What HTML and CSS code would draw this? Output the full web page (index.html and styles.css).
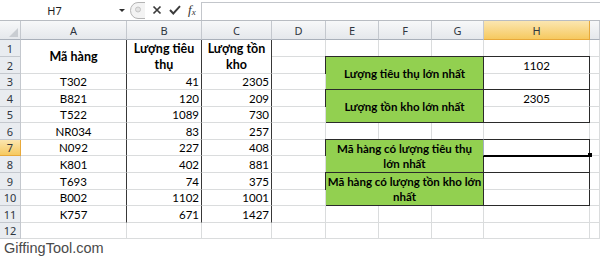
FILE: index.html
```html
<!DOCTYPE html>
<html lang="vi">
<head>
    <meta charset="UTF-8">
    <meta name="viewport" content="width=device-width, initial-scale=1.0">
    <title>Excel - lớn nhất</title>
    <link rel="stylesheet" href="styles.css">
</head>
<body>
    <div class="formula-bar">
        <div class="name-box">
            <span class="name">H7</span>
            <span class="drop"></span>
        </div>
        <svg class="grip" width="15" height="17" viewBox="0 0 15 17">
            <path d="M15 0.5 H8 A7.5 8 0 0 0 8 16.5 H15" fill="#f3f3f3" stroke="#b4b4b4"/>
            <circle cx="8" cy="7.5" r="2.5" fill="#e2e2e2" stroke="#c4c4c4"/>
        </svg>
        <div class="fx-buttons">
            <svg width="10" height="10" viewBox="0 0 10 10">
                <path d="M1.5 1.5 L8.5 8.5 M8.5 1.5 L1.5 8.5" stroke="#3b3b3b" stroke-width="1.7"/>
            </svg>
            <svg width="12" height="10" viewBox="0 0 12 10">
                <path d="M1 5 L4.3 8.5 L11 1.2" stroke="#3b3b3b" stroke-width="1.9" fill="none"/>
            </svg>
            <span class="fx">f<sub>x</sub></span>
        </div>
        <div class="formula-input"></div>
    </div>

    <div class="sheet">
        <!-- column headers -->
        <div class="hd corner">
            <svg width="9" height="9" viewBox="0 0 9 9"><path d="M9 0 V9 H0 Z" fill="#c9cdd2"/></svg>
        </div>
        <div class="hd">A</div>
        <div class="hd">B</div>
        <div class="hd">C</div>
        <div class="hd">D</div>
        <div class="hd">E</div>
        <div class="hd">F</div>
        <div class="hd">G</div>
        <div class="hd sel">H</div>
        <div class="hd"></div>

        <!-- row 1 -->
        <div class="rn">1</div>
        <div class="b dk r2">Mã hàng</div>
        <div class="b dk r2 wrap">Lượng tiêu<br>thụ</div>
        <div class="b dk r2 wrap">Lượng tồn<br>kho</div>
        <div></div><div></div><div></div><div></div><div></div><div></div>

        <!-- row 2 -->
        <div class="rn">2</div>
        <div></div>
        <div class="box r2">Lượng tiêu thụ lớn nhất</div>
        <div class="bt br">1102</div>
        <div></div>

        <!-- row 3 -->
        <div class="rn">3</div>
        <div class="dk">T302</div>
        <div class="dk num">41</div>
        <div class="dk num">2305</div>
        <div></div>
        <div class="br bb"></div>
        <div></div>

        <!-- row 4 -->
        <div class="rn">4</div>
        <div class="dk">B821</div>
        <div class="dk num">120</div>
        <div class="dk num">209</div>
        <div></div>
        <div class="box r2">Lượng tồn kho lớn nhất</div>
        <div class="br">2305</div>
        <div></div>

        <!-- row 5 -->
        <div class="rn">5</div>
        <div class="dk">T522</div>
        <div class="dk num">1089</div>
        <div class="dk num">730</div>
        <div></div>
        <div class="br bb"></div>
        <div></div>

        <!-- row 6 -->
        <div class="rn">6</div>
        <div class="dk">NR034</div>
        <div class="dk num">83</div>
        <div class="dk num">257</div>
        <div></div><div></div><div></div><div></div><div></div><div></div>

        <!-- row 7 -->
        <div class="rn sel">7</div>
        <div class="dk">N092</div>
        <div class="dk num">227</div>
        <div class="dk num">408</div>
        <div></div>
        <div class="box r2 wrap">Mã hàng có lượng tiêu thụ<br>lớn nhất</div>
        <div class="bt br active"></div>
        <div></div>

        <!-- row 8 -->
        <div class="rn">8</div>
        <div class="dk">K801</div>
        <div class="dk num">402</div>
        <div class="dk num">881</div>
        <div></div>
        <div class="br bb"></div>
        <div></div>

        <!-- row 9 -->
        <div class="rn">9</div>
        <div class="dk">T693</div>
        <div class="dk num">74</div>
        <div class="dk num">375</div>
        <div></div>
        <div class="box r2 wrap">Mã hàng có lượng tồn kho lớn<br>nhất</div>
        <div class="br"></div>
        <div></div>

        <!-- row 10 -->
        <div class="rn">10</div>
        <div class="dk">B002</div>
        <div class="dk num">1102</div>
        <div class="dk num">1001</div>
        <div></div>
        <div class="br bb"></div>
        <div></div>

        <!-- row 11 -->
        <div class="rn">11</div>
        <div class="dk">K757</div>
        <div class="dk num">671</div>
        <div class="dk num">1427</div>
        <div></div><div></div><div></div><div></div><div></div><div></div>

        <!-- row 12 -->
        <div class="rn">12</div>
        <div></div><div></div><div></div><div></div><div></div><div></div><div></div><div></div><div></div>
    </div>

    <div class="watermark">GiffingTool.com</div>
</body>
</html>
```

FILE: styles.css
```css
body {
    margin: 0;
    background: #fff;
    font-family: Lato, "Noto Sans", sans-serif;
    color: #000;
}

/* formula bar */
.formula-bar {
    display: flex;
    height: 20px;
    border-bottom: 1px solid #b8bcc2;
    background: #fff;
}
.name-box {
    width: 130px;
    display: flex;
    align-items: center;
    font-family: "Noto Sans", sans-serif;
    font-size: 11px;
    color: #1e1e1e;
}
.name {
    flex: 1;
    text-align: center;
    padding-right: 10px;
}
.drop {
    width: 0;
    height: 0;
    border-left: 3px solid transparent;
    border-right: 3px solid transparent;
    border-top: 3px solid #2e2e2e;
    margin-right: 5px;
}
.grip {
    margin-top: 2px;
}
.fx-buttons {
    width: 56px;
    display: flex;
    align-items: center;
    gap: 7px;
    padding-left: 7px;
    box-sizing: border-box;
}
.fx {
    font-family: "Liberation Serif", serif;
    font-style: italic;
    font-size: 13px;
    color: #333;
    line-height: 1;
}
.fx sub {
    font-size: 9px;
    vertical-align: -1px;
}
.formula-input {
    flex: 1;
    margin-top: 2px;
    border-top: 1px solid #c3c6cb;
    border-left: 1px solid #c3c6cb;
}

/* worksheet */
.sheet {
    display: grid;
    grid-template-columns: 21px 106px 75px 70px 54px 53px 53px 52px 106px 1fr;
    grid-template-rows: 19px 17px 17px 16px 17px 16px 17px 16px 17px 17px 16px 17px 16px;
    font-size: 11.5px;
}
.sheet > div {
    display: flex;
    align-items: center;
    justify-content: center;
    white-space: nowrap;
    overflow: hidden;
    border-right: 1px solid #dadcdd;
    border-bottom: 1px solid #dadcdd;
}
.sheet > .hd,
.sheet > .rn {
    background: linear-gradient(#f7f8f9, #e5e8ec);
    border-color: #c4c8ce;
    font-family: "Noto Sans", sans-serif;
    font-size: 11px;
    color: #2f3640;
}
.sheet > .rn {
    background: #e9ecf0;
}
.sheet > .hd {
    border-bottom-color: #a9b0ba;
}
.sheet > .corner {
    justify-content: flex-end;
    align-items: flex-end;
    padding: 0 2px 2px 0;
}
.sheet > .sel {
    background: linear-gradient(#fbe6b0, #f6c95f);
    border-color: #e8a93a;
}
.sheet > .dk {
    border-right-color: #383838;
}
.sheet > .num {
    justify-content: flex-end;
    padding-right: 2px;
}
.b {
    font-weight: 700;
    font-size: 12.5px;
}
.r2 {
    grid-row: span 2;
}
.wrap {
    text-align: center;
    line-height: 16px;
}

/* boxed answer cells */
.sheet > .box {
    grid-column: span 3;
    background: #92d050;
    border: 1px solid #2a2a2a;
    margin: -1px 0 0 -1px;
    font-weight: 700;
    line-height: 15px;
    text-align: center;
}
.sheet > .bt {
    margin-top: -1px;
    border-top: 1px solid #2a2a2a;
}
.sheet > .br {
    border-right-color: #2a2a2a;
}
.sheet > .bb {
    border-bottom-color: #2a2a2a;
}
.sheet > .active {
    position: relative;
    overflow: visible;
    margin-left: -1px;
    border-left: 1px solid #a3aec2;
    border-bottom-color: #000;
    box-shadow: 0 1px 0 #000;
}
.active::after {
    content: "";
    position: absolute;
    right: -3px;
    bottom: -2px;
    width: 4px;
    height: 4px;
    background: #000;
}

.watermark {
    height: 19px;
    padding-left: 4px;
    font-family: "Liberation Sans", Arial, sans-serif;
    font-size: 14.5px;
    line-height: 19px;
    color: #4a4a4a;
}
```
